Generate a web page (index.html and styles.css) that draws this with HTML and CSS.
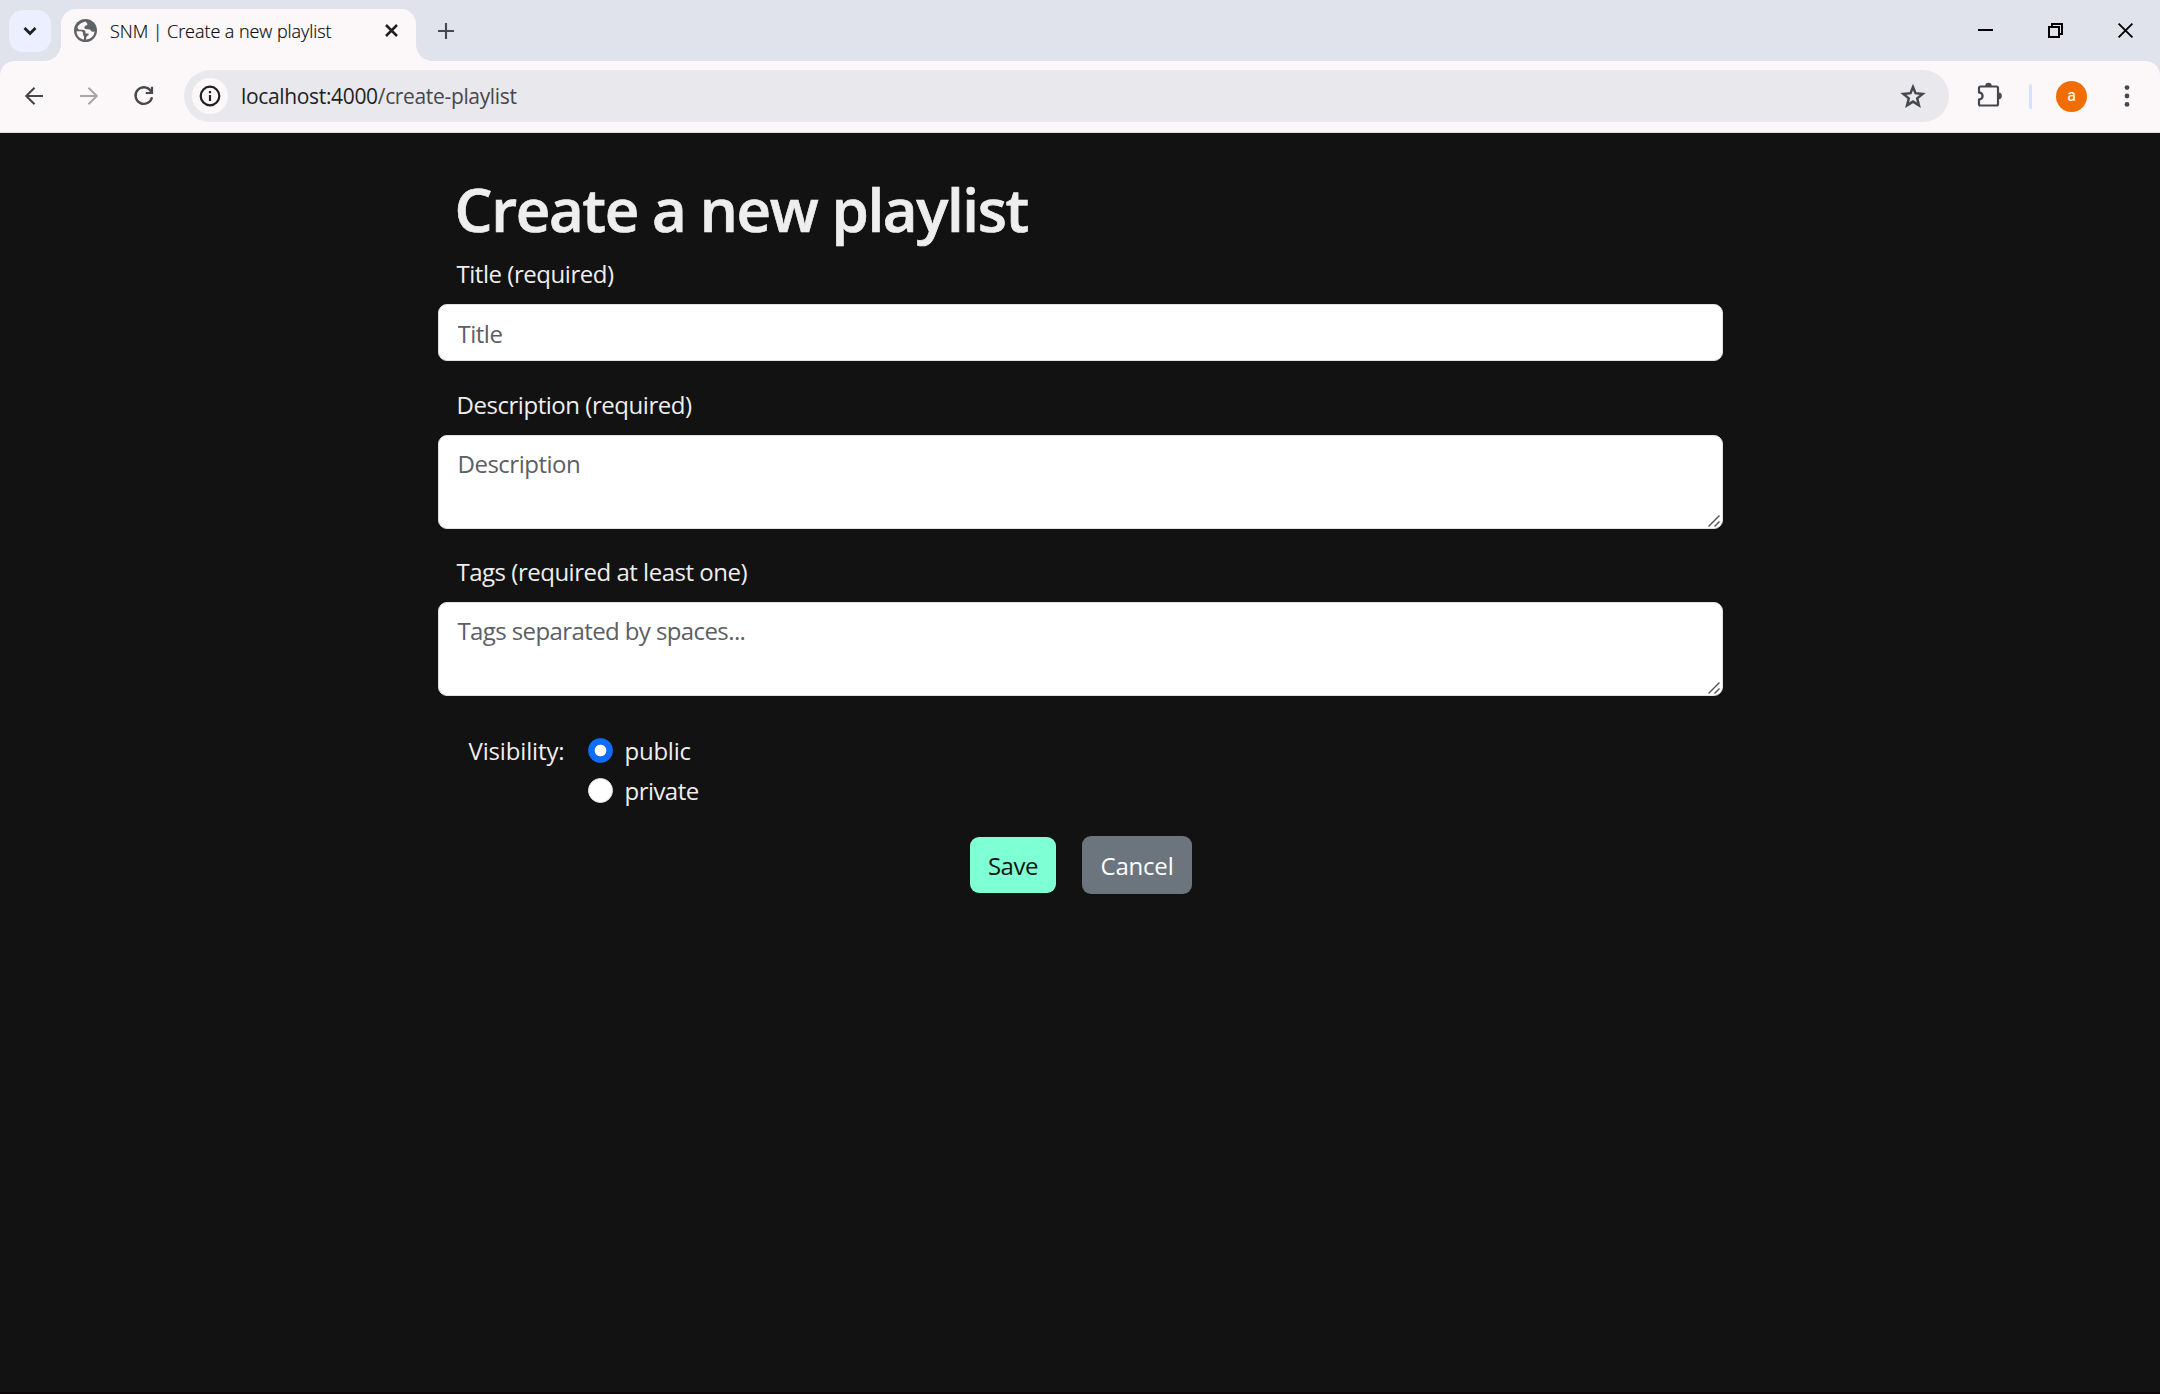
FILE: index.html
```html
<!DOCTYPE html>
<html lang="en">
<head>
<meta charset="utf-8">
<title>SNM | Create a new playlist</title>
<link rel="stylesheet" href="styles.css">
</head>
<body>
<header class="tabstrip">
  <button class="tab-search" aria-label="Search tabs">
    <svg width="14" height="10" viewBox="0 0 14 10"><path d="M1.5 2 7 7.5 12.500 2" fill="none" stroke="#1f1f22" stroke-width="2.800"/></svg>
  </button>
  <div class="tab">
    <svg class="favicon" width="23" height="23" viewBox="0 0 23 23">
      <circle cx="11.500" cy="11.500" r="11.500" fill="#5f6368"/>
      <path d="M11.600 2.500C8.500 3 5.200 4.900 3.600 7.800 3.300 9.500 4.200 10.700 6 10.700H8.800C10.600 10.700 11.500 11.500 11.500 13.400 11.500 14.500 12.300 14.700 13.500 14.600 15.200 14.400 15 16 14 16.600 12.300 17.400 12.200 18.700 12 20.600 16.800 20.500 20.400 16.700 20.600 12.300 19 13.200 17.700 12.900 17 11.700 16.200 10.300 14.600 10.400 13 10.300 10.500 10.100 9.800 8.300 10.800 7.200 11.500 6.400 12.600 6.600 13.300 5.700 13.900 4.900 12.500 3.900 11.600 2.500Z" fill="#fcf8f9"/>
      <path d="M2.500 12.200H7C8.900 12.300 9.200 13.700 9 15.300 8.900 16.700 10.200 16.800 10.100 18.400L9.900 20.500C5.700 19.700 2.600 16.300 2.500 12.200Z" fill="#fcf8f9"/>
    </svg>
    <span class="tab-title">SNM | Create a new playlist</span>
    <svg class="tab-close" width="13" height="13" viewBox="0 0 13 13"><path d="M1 1 12 12M12 1 1 12" stroke="#1f1f22" stroke-width="2.500"/></svg>
  </div>
  <svg class="new-tab" width="16" height="16" viewBox="0 0 16 16"><path d="M8 0V16M0 8H16" stroke="#45484f" stroke-width="2.100"/></svg>
  <div class="window-controls">
    <svg width="16" height="16" viewBox="0 0 16 16"><path d="M0 7H15" stroke="#000" stroke-width="2"/></svg>
    <svg width="16" height="16" viewBox="0 0 16 16"><path d="M1 4H11V14H1ZM4 4V1H14V11H11" fill="none" stroke="#000" stroke-width="2"/></svg>
    <svg width="16" height="16" viewBox="0 0 16 16"><path d="M.6.6 14.400 14.400M14.400.6.6 14.400" stroke="#000" stroke-width="1.900"/></svg>
  </div>
</header>

<nav class="toolbar">
  <div class="nav-icons">
    <svg width="18" height="18" viewBox="0 0 18 18"><path d="M18 9H1.500M9.500.8 1.300 9 9.500 17.200" fill="none" stroke="#45484f" stroke-width="2.100"/></svg>
    <svg width="18" height="18" viewBox="0 0 18 18"><path d="M0 9H16.500M8.500.8 16.700 9 8.500 17.200" fill="none" stroke="#a7a6aa" stroke-width="2.100"/></svg>
    <svg width="20" height="20" viewBox="0 0 20 20"><path d="M17.200 5.700A8.300 8.300 0 1 0 18 11.200" fill="none" stroke="#45484f" stroke-width="2.300"/><path d="M18 .8V7H11.800" fill="none" stroke="#45484f" stroke-width="2.200"/></svg>
  </div>
  <div class="omnibox">
    <span class="site-info">
      <svg width="22" height="22" viewBox="0 0 22 22"><circle cx="11" cy="11" r="9.300" fill="none" stroke="#1f1f22" stroke-width="2.200"/><path d="M11 10V16M11 6V8.200" stroke="#1f1f22" stroke-width="2.200"/></svg>
    </span>
    <span class="url"><span class="host">localhost:4000</span>/create-playlist</span>
    <svg class="star" width="26" height="25" viewBox="0 0 26 25"><path d="M13 3 15.500 9.200 22.600 9.900 17.200 14.400 18.900 21.300 13 17.600 7.100 21.300 8.800 14.400 3.400 9.900 10.500 9.200Z" fill="none" stroke="#45484f" stroke-width="2.500"/></svg>
  </div>
  <svg class="extensions" width="26" height="26" viewBox="0 0 26 26"><path d="M3.500 3.500H19.500Q21 3.500 21 5V21Q21 22.500 19.500 22.500H3.500Q2 22.500 2 21V16.600Q5.600 16 5.600 13T2 9.400V5Q2 3.500 3.500 3.500Z" fill="none" stroke="#45484f" stroke-width="2.200"/><path d="M8.300 3A3.200 3.200 0 0 1 14.700 3ZM21.500 9.600A3.300 3.300 0 0 1 21.500 16.200Z" fill="#45484f"/></svg>
  <span class="divider"></span>
  <span class="avatar">a</span>
  <svg class="menu" width="6" height="22" viewBox="0 0 6 22"><g fill="#45484f"><circle cx="3" cy="2.600" r="2.400"/><circle cx="3" cy="11" r="2.400"/><circle cx="3" cy="19.400" r="2.400"/></g></svg>
</nav>

<main class="page">
  <form class="form">
    <h1 class="heading">Create a new playlist</h1>
    <div class="field">
      <label class="label" for="title">Title (required)</label>
      <input class="control" id="title" type="text" placeholder="Title">
    </div>
    <div class="field">
      <label class="label" for="description">Description (required)</label>
      <div class="area">
        <textarea class="control" id="description" placeholder="Description"></textarea>
        <svg class="grip" width="12" height="12" viewBox="0 0 12 12"><path d="M.5 11.500 11.500.5M6.500 11.500 11.500 6.500" stroke="#505050" stroke-width="1.400"/></svg>
      </div>
    </div>
    <div class="field">
      <label class="label label-tags" for="tags">Tags (required at least one)</label>
      <div class="area">
        <textarea class="control control-tags" id="tags" placeholder="Tags separated by spaces..."></textarea>
        <svg class="grip" width="12" height="12" viewBox="0 0 12 12"><path d="M.5 11.500 11.500.5M6.500 11.500 11.500 6.500" stroke="#505050" stroke-width="1.400"/></svg>
      </div>
    </div>
    <div class="visibility">
      <span class="legend">Visibility:</span>
      <div class="options">
        <label class="option option-public"><input class="radio" type="radio" name="visibility" checked>public</label>
        <label class="option"><input class="radio" type="radio" name="visibility">private</label>
      </div>
    </div>
    <div class="actions">
      <button class="btn btn-save" type="button">Save</button>
      <button class="btn btn-cancel" type="button">Cancel</button>
    </div>
  </form>
</main>
</body>
</html>
```

FILE: styles.css
```css
* { box-sizing: border-box; }

body {
  margin: 0;
  height: 1394px;
  display: flex;
  flex-direction: column;
  overflow: hidden;
  background: #121212;
  font-family: "Open Sans", "Noto Sans", sans-serif;
}

svg { display: block; flex: none; overflow: visible; }
button { border: 0; padding: 0; font: inherit; }

/* Tab strip */
.tabstrip {
  flex: none;
  height: 61px;
  padding: 9px 26px 0 9px;
  display: flex;
  align-items: flex-start;
  background: #e0e3ec;
}
.tab-search {
  width: 42px;
  height: 42px;
  margin: 1px 10px 0 0;
  display: flex;
  align-items: center;
  justify-content: center;
  border-radius: 14px;
  background: #ecefff;
}
.tab {
  position: relative;
  width: 355px;
  height: 52px;
  padding: 0 18px 9px 13px;
  display: flex;
  align-items: center;
  border-radius: 15px 15px 0 0;
  background: #fcf8f9;
}
.tab::before,
.tab::after {
  content: "";
  position: absolute;
  bottom: 0;
  width: 16px;
  height: 16px;
}
.tab::before { right: 100%; background: radial-gradient(circle at 0 0, transparent 15.5px, #fcf8f9 16px); }
.tab::after { left: 100%; background: radial-gradient(circle at 100% 0, transparent 15.5px, #fcf8f9 16px); }
.tab-title {
  flex: 1;
  margin-left: 13px;
  color: #000;
  font-size: 18px;
  font-weight: 300;
  line-height: 24px;
  letter-spacing: -0.06px;
  padding-top: 1px;
  white-space: nowrap;
  -webkit-text-stroke: 0.2px #1f1f22;
}
.new-tab { margin: 14px 0 0 22px; }
.window-controls {
  margin: 14px 0 0 auto;
  display: flex;
  gap: 54px;
}

/* Toolbar */
.toolbar {
  flex: none;
  height: 72px;
  padding: 0 30px 1px 25px;
  display: flex;
  align-items: center;
  border-bottom: 1px solid #dfdde0;
  background:
    radial-gradient(circle at 100% 100%, transparent 13.5px, #e0e3ec 14px) 0 0 / 14px 14px no-repeat,
    radial-gradient(circle at 0 100%, transparent 13.5px, #e0e3ec 14px) 100% 0 / 14px 14px no-repeat,
    #fcf8f9;
}
.nav-icons {
  width: 159px;
  display: flex;
  align-items: center;
  gap: 36.5px;
}
.omnibox {
  width: 1765px;
  height: 52px;
  padding: 0 23px 0 8px;
  display: flex;
  align-items: center;
  border-radius: 26px;
  background: #e9e8ec;
}
.site-info {
  width: 36px;
  height: 36px;
  display: flex;
  align-items: center;
  justify-content: center;
  border-radius: 50%;
  background: #fcf8f9;
}
.url {
  flex: 1;
  margin-left: 13px;
  color: #47474b;
  font-size: 21px;
  line-height: 30px;
  letter-spacing: -0.34px;
}
.host { color: #1f1f22; }
.extensions { margin-left: 28px; }
.divider {
  width: 3px;
  height: 25px;
  margin-left: 26px;
  border-radius: 2px;
  background: #d3e3fd;
}
.avatar {
  width: 31px;
  height: 31px;
  margin-left: 24px;
  padding-bottom: 1px;
  display: flex;
  align-items: center;
  justify-content: center;
  border-radius: 50%;
  background: #f06d00;
  color: #fff;
  font: 400 16px Roboto, sans-serif;
}
.menu { margin-left: auto; }

/* Page */
.page {
  flex: 1;
  padding-top: 40px;
  display: flex;
  justify-content: center;
  align-items: flex-start;
  border-bottom: 2px solid #0b0508;
}
.form { width: 1285px; }
.heading {
  margin: 0 0 11px;
  padding-left: 17px;
  color: #eee;
  font-size: 60px;
  font-weight: 600;
  line-height: 72px;
  letter-spacing: -1.37px;
  -webkit-text-stroke: 0.7px #eee;
}
.field {
  margin-bottom: 25px;
  display: flex;
  flex-direction: column;
}
.field:nth-of-type(1) { margin-bottom: 26px; }
.label {
  margin-bottom: 12px;
  padding-left: 19px;
  color: #eee;
  font-size: 24px;
  line-height: 36px;
  letter-spacing: -0.46px;
}
.label-tags { letter-spacing: -0.49px; }
.control {
  display: block;
  width: 100%;
  height: 57px;
  margin: 0;
  padding: 10px 18px 9px 19px;
  border: 1px solid #dee2e6;
  border-radius: 9px;
  outline: 0;
  background: #fff;
  font: 24px/36px "Open Sans", "Noto Sans", sans-serif;
  letter-spacing: -0.5px;
}
.control::placeholder { color: #5b6064; opacity: 1; }
.control-tags { letter-spacing: -0.6px; }
textarea.control {
  height: 94px;
  padding-top: 10px;
  resize: none;
  overflow: hidden;
}
.area { position: relative; }
.grip {
  position: absolute;
  right: 3px;
  bottom: 2px;
}
.visibility {
  margin-top: 37px;
  padding-left: 31px;
  display: flex;
  color: #eee;
  font-size: 24px;
  line-height: 36px;
}
.legend { width: 119px; letter-spacing: -0.15px; }
.options { display: flex; flex-direction: column; gap: 4px; }
.option {
  display: flex;
  align-items: flex-start;
  letter-spacing: -0.55px;
}
.option-public { letter-spacing: -0.25px; }
.radio {
  appearance: none;
  width: 25px;
  height: 25px;
  margin: 5px 12px 0 0;
  border: 1px solid #dee2e6;
  border-radius: 50%;
  background: #fff;
}
.radio:checked {
  border-color: #0d6efd;
  background: radial-gradient(circle, #fff 5.5px, #0d6efd 6.2px);
}
.actions {
  margin-top: 27px;
  padding-left: 2px;
  display: flex;
  justify-content: center;
  align-items: center;
  gap: 26px;
}
.btn {
  height: 58px;
  padding-top: 2px;
  border-radius: 9px;
  font-size: 24px;
  line-height: 36px;
}
.btn-save {
  width: 86px;
  height: 56px;
  background: #7fffd4;
  color: #121212;
  letter-spacing: -0.45px;
}
.btn-cancel {
  width: 110px;
  background: #6c757d;
  color: #fff;
  letter-spacing: -0.2px;
}
```
